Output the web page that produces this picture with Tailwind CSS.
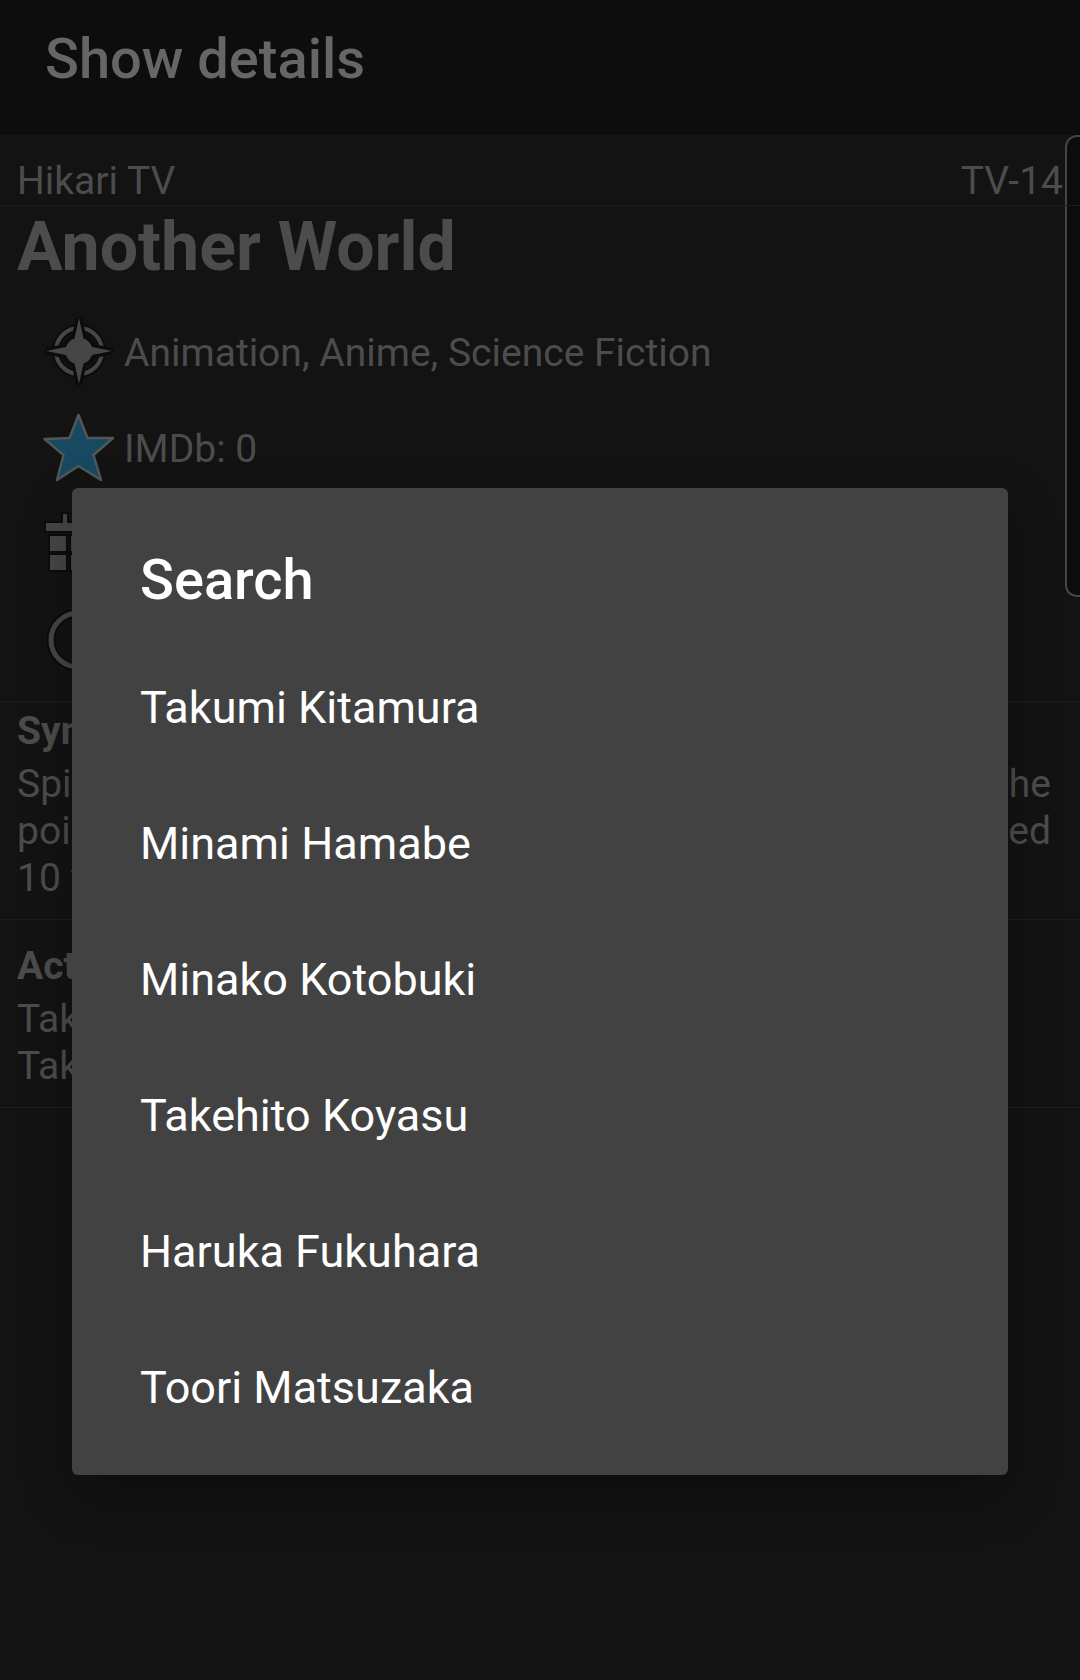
<!DOCTYPE html>
<html lang="en">
<head>
<meta charset="utf-8">
<meta name="viewport" content="width=device-width, initial-scale=1">
<title>Show details</title>
<script src="https://cdn.jsdelivr.net/npm/@tailwindcss/browser@4"></script>
</head>
<body class="bg-[#131313] text-[#4c4c4c] font-[Roboto,sans-serif] text-[39px] leading-[47px]">
<div class="relative min-h-screen overflow-hidden">
  <header class="h-[135px] bg-[#0d0d0d] px-[45px] pt-[25px]">
    <h1 class="text-[56px] leading-[68px] font-medium text-[#666666]">Show details</h1>
  </header>

  <main class="relative">
    <!-- Poster peeking in from the right edge -->
    <div class="absolute right-0 top-0 h-[462px] w-[15px] rounded-l-[12px] border-[2px] border-r-0 border-[#454545] bg-[#0c0c0c]"></div>

    <div class="relative flex justify-between border-b border-[#1e1e1e] pt-[23px] px-[17px]">
      <span>Hikari TV</span>
      <span>TV-14</span>
    </div>
    <h2 class="mt-px mb-[18px] px-[17px] text-[68px] leading-[80px] font-bold">Another World</h2>

    <ul class="border-b border-[#1e1e1e] pb-3 pl-[43px]">
      <li class="flex h-24 items-center gap-[9px]">
        <svg class="size-[72px] shrink-0" viewBox="0 0 72 72" aria-hidden="true">
          <circle cx="36" cy="34" r="23" fill="none" stroke="#0c0c0c" stroke-width="8"/>
          <circle cx="36" cy="34" r="23" fill="none" stroke="#464646" stroke-width="4"/>
          <path d="M36 3l4 18c5 1.500 8 4 9.500 9.500L67 34l-17.500 4c-1.500 4-4.500 7-9.500 8.500L36 65l-4-18.500c-5-1.500-8-4.500-9.500-8.500L5 34l17.500-3.500c1.500-5.500 4.500-8 9.500-9.500z" fill="#464646" stroke="#0c0c0c" stroke-width="7" stroke-linejoin="round"/>
          <path d="M36 1l4.500 20.500c4 1.500 7 4 8.500 8.500L69 34l-20 4c-1.500 4.500-4.500 7-8.500 8.500L36 67l-4.500-20.500c-4-1.500-7-4-8.500-8.500L3 34l20-4c1.500-4.500 4.500-7 8.500-8.500z" fill="#464646"/>
        </svg>
        <span>Animation, Anime, Science Fiction</span>
      </li>
      <li class="flex h-24 items-center gap-[9px]">
        <svg class="size-[72px] shrink-0" viewBox="0 0 72 72" aria-hidden="true">
          <path d="M35.500 2l9 23H70L50.500 42l7.500 25-22.500-14L14 67l6.500-25L1.500 26l25-1z" fill="#174a61" stroke="#525658" stroke-width="2.500" stroke-linejoin="round"/>
        </svg>
        <span>IMDb: 0</span>
      </li>
      <li class="flex h-24 items-center">
        <svg class="size-[72px] shrink-0" viewBox="0 0 72 72" aria-hidden="true">
          <path d="M3 14h17V5h4v9h24V5h4v9h17v8H3zM7 27h16v15H7zM28 27h16v15H28zM49 27h16v15H49zM7 46h16v15H7zM28 46h16v15H28zM49 46h16v15H49z" fill="#464646" stroke="#0c0c0c" stroke-width="4" paint-order="stroke"/>
        </svg>
      </li>
      <li class="flex h-24 items-center">
        <svg class="size-[72px] shrink-0" viewBox="0 0 72 72" aria-hidden="true">
          <circle cx="35" cy="35" r="27" fill="none" stroke="#0c0c0c" stroke-width="9"/>
          <path d="M35 17v18l11 8" fill="none" stroke="#464646" stroke-width="5"/>
          <circle cx="35" cy="35" r="27" fill="none" stroke="#464646" stroke-width="5"/>
        </svg>
      </li>
    </ul>

    <section class="border-b border-[#1e1e1e] pt-[6px] pb-[17px] pl-[17px] pr-[29px]">
      <h3 class="mb-[6px] font-bold">Synopsis</h3>
      <p class="flex justify-between"><span>Spi</span><span>the</span></p>
      <p class="flex justify-between"><span>poi</span><span>ed</span></p>
      <p>10 y</p>
    </section>

    <section class="border-b border-[#1e1e1e] pt-[23px] pb-[17px] px-[17px]">
      <h3 class="mb-[6px] font-bold">Actors</h3>
      <p>Takumi</p>
      <p>Takehito</p>
    </section>
  </main>

  <!-- Search dialog over the dimmed page -->
  <div class="absolute inset-x-0 top-0 px-[72px] pt-[488px]">
    <div role="dialog" aria-labelledby="search-title" class="rounded-[6px] bg-[#424242] pb-5 pt-[58px] text-white shadow-[0_20px_50px_rgba(0,0,0,0.25)]">
      <h2 id="search-title" class="mb-[25px] px-[68px] text-[56px] leading-[68px] font-medium">Search</h2>
      <ul class="text-[45px]">
        <li><button class="flex h-[136px] w-full items-center px-[68px]">Takumi Kitamura</button></li>
        <li><button class="flex h-[136px] w-full items-center px-[68px]">Minami Hamabe</button></li>
        <li><button class="flex h-[136px] w-full items-center px-[68px]">Minako Kotobuki</button></li>
        <li><button class="flex h-[136px] w-full items-center px-[68px]">Takehito Koyasu</button></li>
        <li><button class="flex h-[136px] w-full items-center px-[68px]">Haruka Fukuhara</button></li>
        <li><button class="flex h-[136px] w-full items-center px-[68px]">Toori Matsuzaka</button></li>
      </ul>
    </div>
  </div>
</div>
</body>
</html>
